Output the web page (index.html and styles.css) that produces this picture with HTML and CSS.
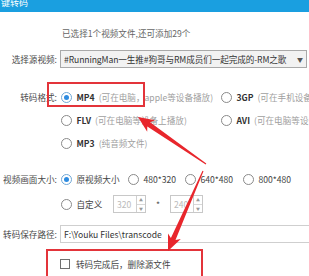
FILE: index.html
```html
<!DOCTYPE html>
<html>
<head>
	<meta charset="UTF-8">
	<title>转码</title>
	<link rel="stylesheet" href="styles.css">
</head>
<body>
	<div class="titlebar"><span class="title">键转码</span></div>
	<div class="panel">
		<p class="info">已选择1个视频文件,还可添加29个</p>
		<div class="row">
			<span class="lbl">选择源视频:</span>
			<div class="select"><span class="sel-text">#RunningMan一生推#狗哥与RM成员们一起完成的-RM之歌</span><span class="caret">▼</span></div>
		</div>
		<div class="row row-top">
			<span class="lbl">转码格式:</span>
			<div class="formats">
				<div class="opt"><i class="radio on"></i><b>MP4</b><span class="hint">(可在电脑，apple等设备播放)</span></div>
				<div class="opt"><i class="radio"></i><b>3GP</b><span class="hint">(可在手机设备播放)</span></div>
				<div class="opt"><i class="radio"></i><b>FLV</b><span class="hint">(可在电脑等设备上播放)</span></div>
				<div class="opt"><i class="radio"></i><b>AVI</b><span class="hint">(可在电脑等设备播放)</span></div>
				<div class="opt"><i class="radio"></i><b>MP3</b><span class="hint">(纯音频文件)</span></div>
			</div>
		</div>
		<div class="row row-size">
			<span class="lbl">视频画面大小:</span>
			<div class="sizes">
				<div class="size s1"><i class="radio on"></i>原视频大小</div>
				<div class="size s2"><i class="radio"></i>480*320</div>
				<div class="size s3"><i class="radio"></i>640*480</div>
				<div class="size"><i class="radio"></i>800*480</div>
			</div>
		</div>
		<div class="row row-custom">
			<span class="lbl"></span>
			<div class="custom">
				<div class="size s-custom"><i class="radio"></i>自定义</div>
				<div class="spin"><span class="spin-val">320</span><span class="spin-btns"><em>▲</em><em>▼</em></span></div>
				<span class="times">*</span>
				<div class="spin"><span class="spin-val">240</span><span class="spin-btns"><em>▲</em><em>▼</em></span></div>
			</div>
		</div>
		<div class="row row-path">
			<span class="lbl">转码保存路径:</span>
			<div class="path">F:\Youku Files\transcode</div>
		</div>
		<div class="row row-check">
			<span class="lbl"></span>
			<div class="check"><i class="box"></i>转码完成后，删除源文件</div>
		</div>
	</div>
	<svg class="marks" width="309" height="276" viewBox="0 0 309 276">
		<rect x="48" y="83" width="96" height="23" fill="none" stroke="#e3343a" stroke-width="2"/>
		<rect x="47" y="250" width="155" height="30" fill="none" stroke="#e3343a" stroke-width="2"/>
		<polygon fill="#e8262c" points="138,117 155.1,120.3 150.1,122.3 206.3,163.6 205.7,164.4 147.3,126.5 147.2,131.8"/>
		<polygon fill="#e8262c" points="168,251 180.8,239.1 175.5,240.1 203.5,171.2 202.5,170.8 170.9,238.1 168,233.5"/>
	</svg>
</body>
</html>
```

FILE: styles.css
```css
*{margin: 0;padding: 0;box-sizing: border-box;}
html,body{width: 309px;height: 276px;overflow: hidden;}
body{background: #fff;font-family: "Noto Sans CJK SC", "Noto Sans", sans-serif;font-size: 8.6px;color: #4a4a4a;position: relative;}
.titlebar{height: 12px;background: #1a9fe0;overflow: hidden;}
.title{display: block;color: #fff;font-size: 9px;line-height: 12px;margin-top: -3px;padding-left: 1px;}
.panel{padding-top: 12px;}
.info{height: 18px;line-height: 18px;padding-left: 62px;color: #666;}
.row{display: flex;align-items: center;margin-top: 8px;}
.row-top{margin-top: 20px;align-items: flex-start;}
.row-top .lbl{height: 18px;line-height: 18px;}
.row-size{margin-top: 18px;}
.row-custom{margin-top: 7px;}
.row-path{margin-top: 12px;}
.row-check{margin-top: 12px;}
.lbl{width: 58px;flex: none;text-align: right;padding-right: 1px;color: #4a4a4a;white-space: nowrap;}
.select{margin-left: 2px;flex: 1;margin-right: 2px;height: 18px;border: 1px solid #a9a9a9;background: #f2f2f2;display: flex;align-items: center;padding-left: 3px;color: #333;overflow: hidden;}
.sel-text{flex: 1;white-space: nowrap;overflow: hidden;letter-spacing: -0.1px;}
.caret{font-size: 6px;color: #555;padding: 0 3px 0 2px;}
.formats{display: grid;grid-template-columns: 160px auto;row-gap: 5px;margin-left: 2px;white-space: nowrap;}
.opt{height: 18px;display: flex;align-items: center;overflow: hidden;}
.opt b{color: #333;font-weight: bold;margin-right: 4px;}
.hint{color: #a0a0a0;}
.radio{width: 11px;height: 11px;border: 1px solid #8a8a8a;border-radius: 50%;background: #fff;flex: none;margin: 0 5px 0 0.5px;position: relative;display: block;}
.radio.on{border-color: #6fa7d6;}
.radio.on:after{content: "";position: absolute;left: 2px;top: 2px;width: 5px;height: 5px;border-radius: 50%;background: #2d8be0;}
.sizes,.custom{display: flex;align-items: center;margin-left: 2px;white-space: nowrap;color: #444;}
.size{height: 18px;display: flex;align-items: center;}
.s1{width: 67px;}
.s2{width: 57px;}
.s3{width: 58px;}
.s-custom{width: 53px;}
.spin{width: 33px;height: 18px;border: 1px solid #c8c8c8;display: flex;color: #bbb;background: #fff;}
.spin-val{flex: 1;line-height: 16px;padding-left: 3px;}
.spin-btns{width: 9px;border-left: 1px solid #d0d0d0;display: flex;flex-direction: column;}
.spin-btns em{flex: 1;font-style: normal;font-size: 4px;line-height: 8px;text-align: center;color: #999;}
.spin-btns em + em{border-top: 1px solid #d8d8d8;}
.times{width: 24px;text-align: center;color: #555;}
.path{margin-left: 2px;flex: 1;margin-right: -4px;height: 18px;line-height: 16px;border: 1px solid #cfcfcf;padding-left: 3px;color: #333;white-space: nowrap;overflow: hidden;}
.check{margin-left: 2px;height: 18px;display: flex;align-items: center;color: #444;}
.box{display: block;width: 10px;height: 10px;border: 1px solid #707070;margin: 0 6px 0 0;background: #fff;}
.marks{position: absolute;left: 0;top: 0;pointer-events: none;}
```
